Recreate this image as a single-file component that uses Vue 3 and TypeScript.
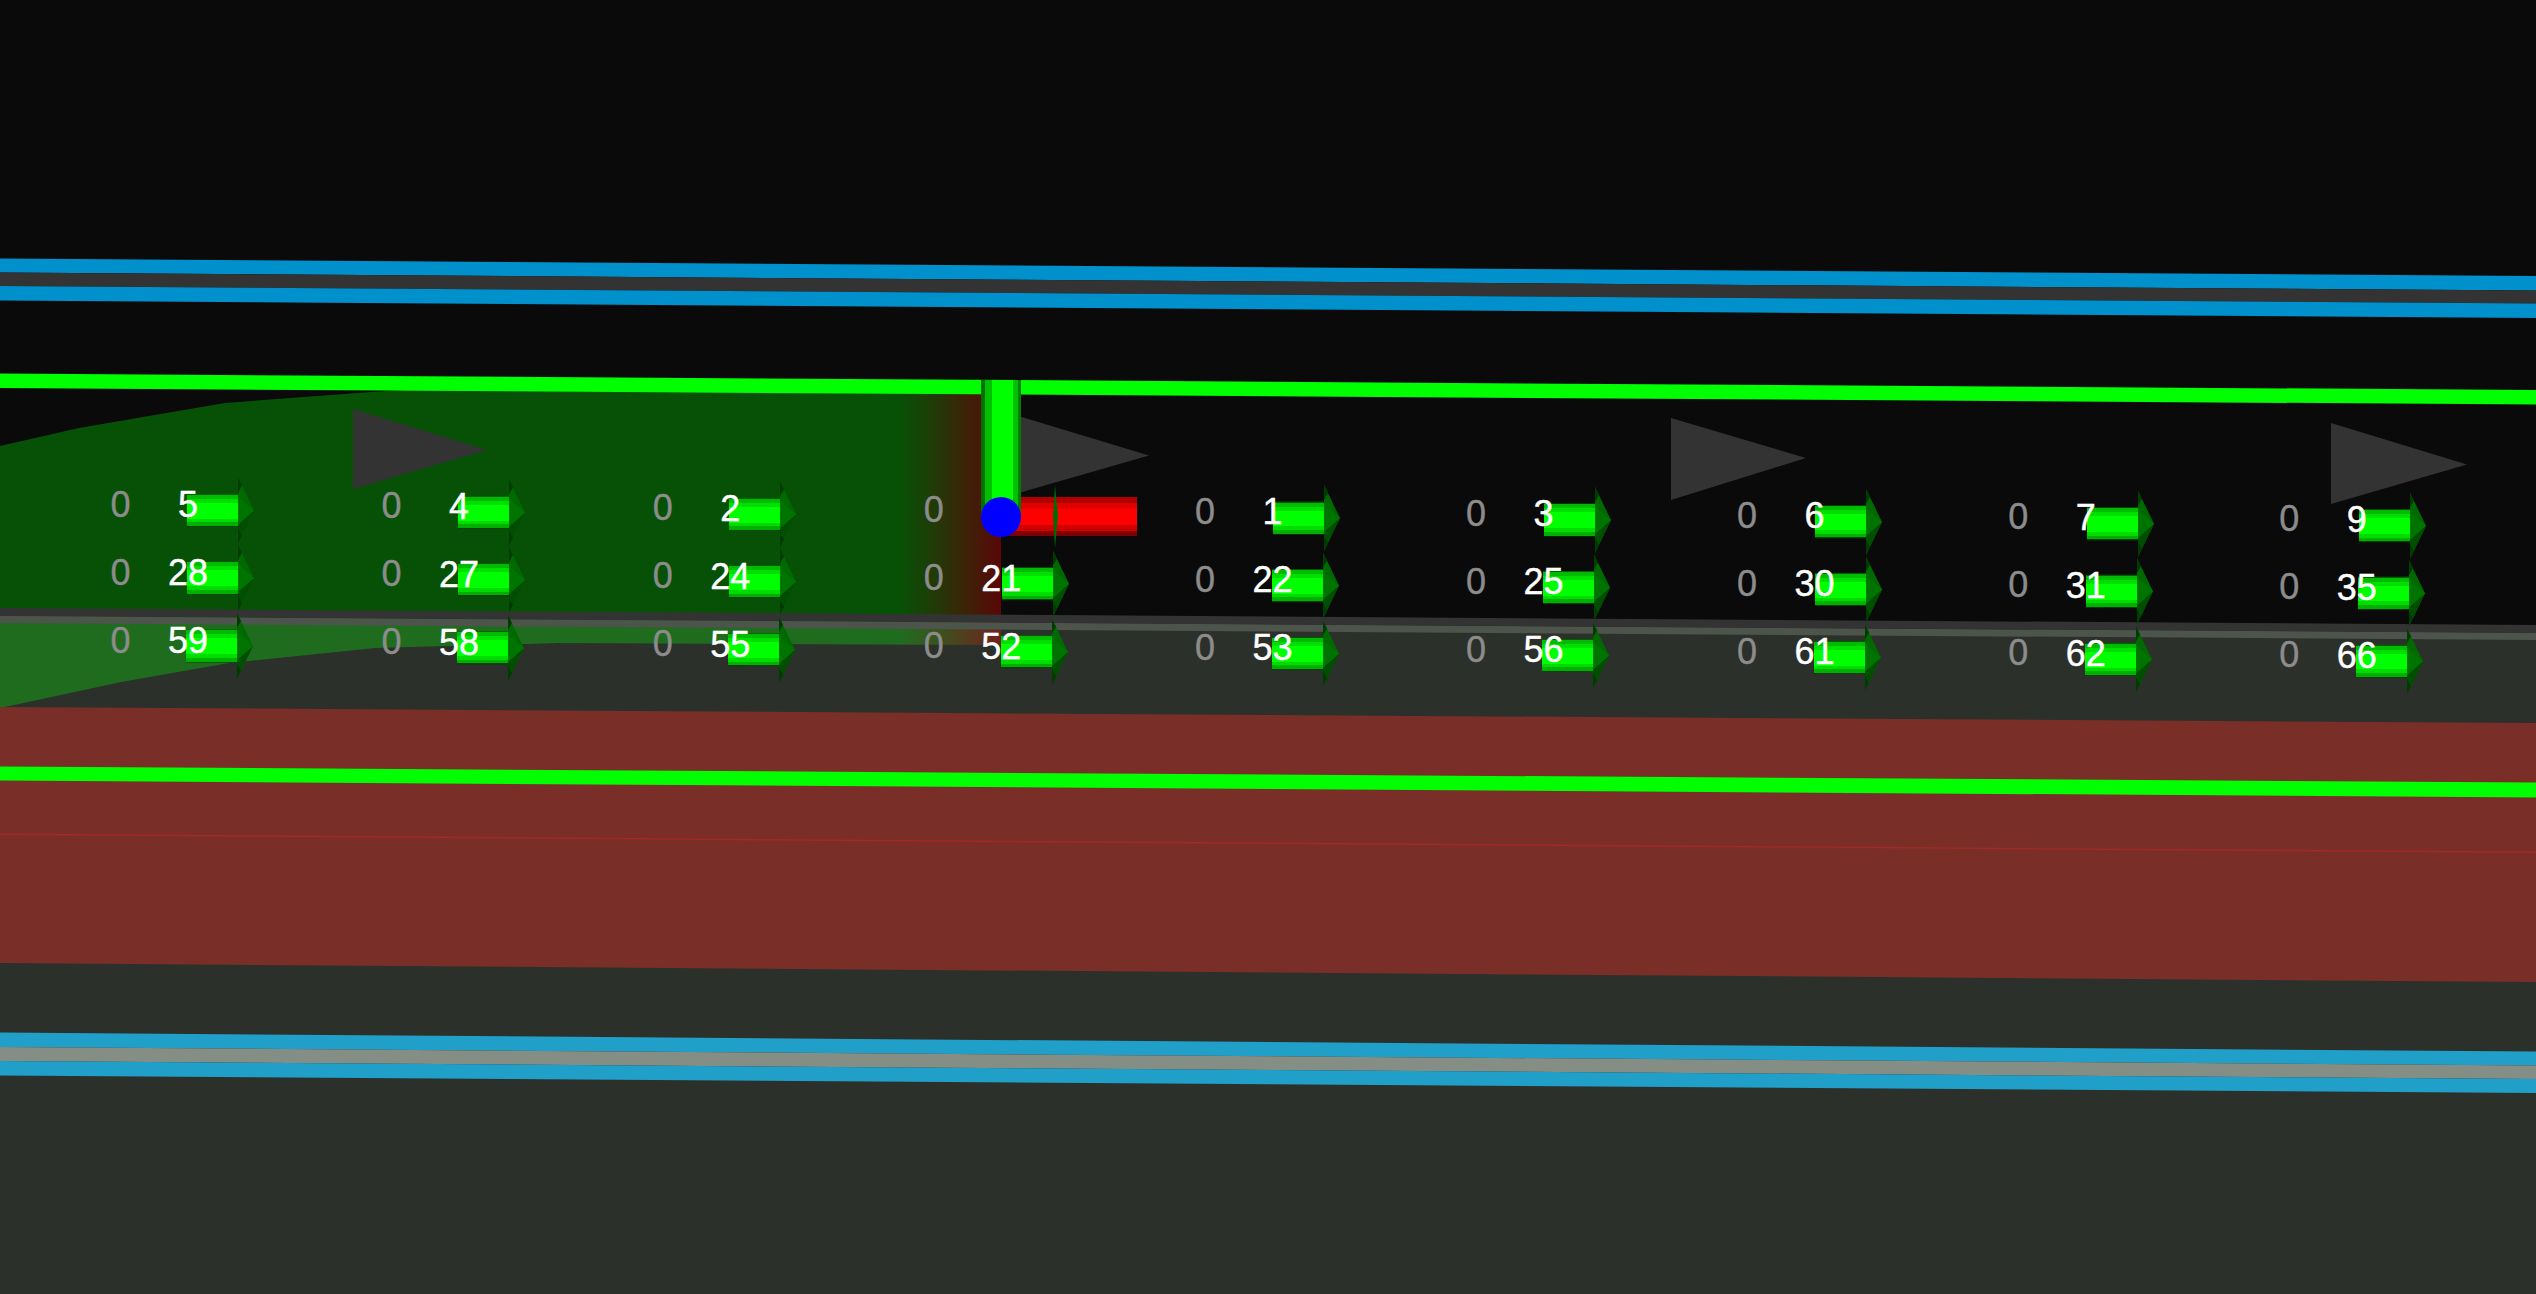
<template>
  <div class="scene">
    <svg class="canvas" viewBox="0 0 2536 1294" width="2536" height="1294">
      <defs>
        <linearGradient id="zoneFill" gradientUnits="userSpaceOnUse" x1="900" y1="0" x2="1001" y2="0">
          <stop offset="0" stop-color="#00ff00" stop-opacity="0.29" />
          <stop offset="1" stop-color="#ff0000" stop-opacity="0.33" />
        </linearGradient>
        <linearGradient id="shaftGreen" x1="0" y1="0" x2="0" y2="1">
          <stop offset="0" stop-color="#006000" />
          <stop offset="0.03" stop-color="#006000" />
          <stop offset="0.03" stop-color="#00bc00" />
          <stop offset="0.15" stop-color="#00bc00" />
          <stop offset="0.15" stop-color="#00e000" />
          <stop offset="0.27" stop-color="#00e000" />
          <stop offset="0.27" stop-color="#00ff00" />
          <stop offset="0.75" stop-color="#00ff00" />
          <stop offset="0.75" stop-color="#00dc00" />
          <stop offset="0.86" stop-color="#00dc00" />
          <stop offset="0.86" stop-color="#00b000" />
          <stop offset="0.97" stop-color="#00b000" />
          <stop offset="0.97" stop-color="#004000" />
          <stop offset="1" stop-color="#004000" />
        </linearGradient>
        <linearGradient id="barGreen" x1="0" y1="0" x2="1" y2="0">
          <stop offset="0" stop-color="#007000" />
          <stop offset="0.1" stop-color="#007000" />
          <stop offset="0.1" stop-color="#00c000" />
          <stop offset="0.28" stop-color="#00c000" />
          <stop offset="0.28" stop-color="#00ff00" />
          <stop offset="0.8" stop-color="#00ff00" />
          <stop offset="0.8" stop-color="#00c000" />
          <stop offset="0.92" stop-color="#00c000" />
          <stop offset="0.92" stop-color="#008000" />
          <stop offset="1" stop-color="#008000" />
        </linearGradient>
        <linearGradient id="barRed" x1="0" y1="0" x2="0" y2="1">
          <stop offset="0" stop-color="#b00000" />
          <stop offset="0.16" stop-color="#b00000" />
          <stop offset="0.16" stop-color="#e00000" />
          <stop offset="0.3" stop-color="#e00000" />
          <stop offset="0.3" stop-color="#ff0000" />
          <stop offset="0.72" stop-color="#ff0000" />
          <stop offset="0.72" stop-color="#d00000" />
          <stop offset="0.86" stop-color="#d00000" />
          <stop offset="0.86" stop-color="#800000" />
          <stop offset="1" stop-color="#800000" />
        </linearGradient>
      </defs>

      <rect class="sky" width="2536" height="1294" />
      <polygon class="ground" points="0,616 2536,633 2536,1294 0,1294" />

      <polygon
        class="zone"
        points="0,446 79,428 225,403 371,392 420,389 1001,392 1001,645 560,643 375,648 229,663 121,682 0,708"
      />

      <polygon class="band-dark" points="0,608 2536,625 2536,633 0,616" />
      <polygon class="band-light" points="0,616 2536,633 2536,640 0,623" />

      <polygon class="lane" points="0,707 2536,723 2536,982 0,963" />
      <polygon class="lane-line" points="0,833.5 2536,851.5 2536,853 0,835" />

      <polygon class="blue-top" points="0,258.5 2536,276 2536,290.5 0,272.5" />
      <polygon class="grey-top" points="0,272.5 2536,290.5 2536,303.5 0,286" />
      <polygon class="blue-top" points="0,286 2536,303.5 2536,318 0,300.5" />

      <polygon class="green-line" points="0,373.5 2536,390 2536,404.5 0,388" />
      <polygon class="green-line" points="0,766.5 2536,782.5 2536,797.5 0,780.5" />

      <polygon class="blue-low" points="0,1032.5 2536,1051.5 2536,1065.5 0,1047" />
      <polygon class="grey-low" points="0,1047 2536,1065.5 2536,1079 0,1061" />
      <polygon class="blue-low" points="0,1061 2536,1079 2536,1093 0,1075.5" />

      <polygon v-for="(tri, i) in triangles" :key="i" class="flow-mark" :points="tri" />

      <rect class="red-bar" x="1001" y="497" width="136" height="39" />
      <rect class="green-bar" x="981" y="380" width="40" height="137" />
      <circle class="node" cx="1001" cy="517" r="20" />

      <polygon class="sliver" points="1055,485 1058,516 1055,548 1053,516" />

      <g v-for="arrow in arrows" :key="arrow.id" :transform="arrow.transform">
        <rect class="shaft" x="-67" y="-16.5" width="52" height="33" />
        <polygon class="head" points="-16,-33 0,0 -16,33" />
        <polygon class="head-low" points="-16,14 0,0 -16,33" />
        <polygon class="head-core" points="-16,-14 0,0 -16,14" />
        <polygon class="head-edge" points="-16,-33 -12,-25 -16,-18" />
        <polygon class="head-edge" points="-16,33 -12,25 -16,18" />
      </g>

      <g class="labels">
        <text v-for="zero in zeros" :key="zero.id" class="count" :x="zero.x" :y="zero.y">0</text>
        <text v-for="num in numbers" :key="num.id" class="id" :x="num.x" :y="num.y">{{ num.text }}</text>
      </g>
    </svg>
  </div>
</template>

<script setup lang="ts">
// detector ids per row, left to right, null where the node hides it
const ids: (number | null)[][] = [
  [5, 4, 2, null, 1, 3, 6, 7, 9],
  [28, 27, 24, 21, 22, 25, 30, 31, 35],
  [59, 58, 55, 52, 53, 56, 61, 62, 66],
]

const tipX = [
  [254, 525, 796, 0, 1340, 1611, 1882, 2154, 2426],
  [254, 525, 796, 1069, 1339, 1610, 1882, 2153, 2425],
  [253, 524, 795, 1068, 1339, 1609, 1881, 2152, 2423],
]

const rowTip = [510.5, 578, 646]
const rowText = [516.5, 584.5, 652.5]

const triangles = [
  '353,409 487,450 353,489',
  '1012,414 1149,455.5 1012,495',
  '1671,418 1806,458 1671,500',
  '2331,423 2467,464.5 2331,504',
]

const arrows = tipX.flatMap((row, r) =>
  row.flatMap((x, c) =>
    x === 0
      ? []
      : [{ id: `${r}-${c}`, transform: `translate(${x} ${rowTip[r] + 1.9 * c})` }],
  ),
)

const zeros = ids.flatMap((row, r) =>
  row.map((_, c) => ({ id: `${r}-${c}`, x: 120.5 + 271.1 * c, y: rowText[r] + 1.85 * c })),
)

const numbers = ids.flatMap((row, r) =>
  row.flatMap((n, c) =>
    n === null
      ? []
      : [{ id: `${r}-${c}`, text: String(n), x: 188 + 271.1 * c, y: rowText[r] + 0.5 + 1.85 * c }],
  ),
)
</script>

<style>
html,
body {
  margin: 0;
  background: #0a0a0a;
  overflow: hidden;
}
</style>

<style scoped>
.scene {
  width: 2536px;
  height: 1294px;
}

.canvas {
  display: block;
}

.sky { fill: #0a0a0a; }
.ground { fill: #2c302b; }
.zone { fill: url(#zoneFill); }
.band-dark { fill: #333333; }
.band-light { fill: #4c544c; }
.lane { fill: #7a2e28; }
.lane-line { fill: #a02a26; }
.blue-top { fill: #0090cc; }
.grey-top { fill: #333333; }
.blue-low { fill: #20a0c8; }
.grey-low { fill: #858e85; }
.green-line { fill: #00ff00; }
.flow-mark { fill: #333333; }

.red-bar { fill: url(#barRed); }
.green-bar { fill: url(#barGreen); }
.node { fill: #0000ff; }
.sliver { fill: #006a00; }

.shaft { fill: url(#shaftGreen); }
.head { fill: #006a00; }
.head-low { fill: #004e00; }
.head-core { fill: #007400; }
.head-edge { fill: #003c00; }

.labels {
  font-family: "Liberation Sans", Arial, sans-serif;
  font-size: 36px;
  text-anchor: middle;
}

.count {
  fill: #8c8c8c;
  stroke: #8c8c8c;
  stroke-width: 0.4px;
}

.id {
  fill: #ffffff;
  stroke: #ffffff;
  stroke-width: 0.4px;
}
</style>
